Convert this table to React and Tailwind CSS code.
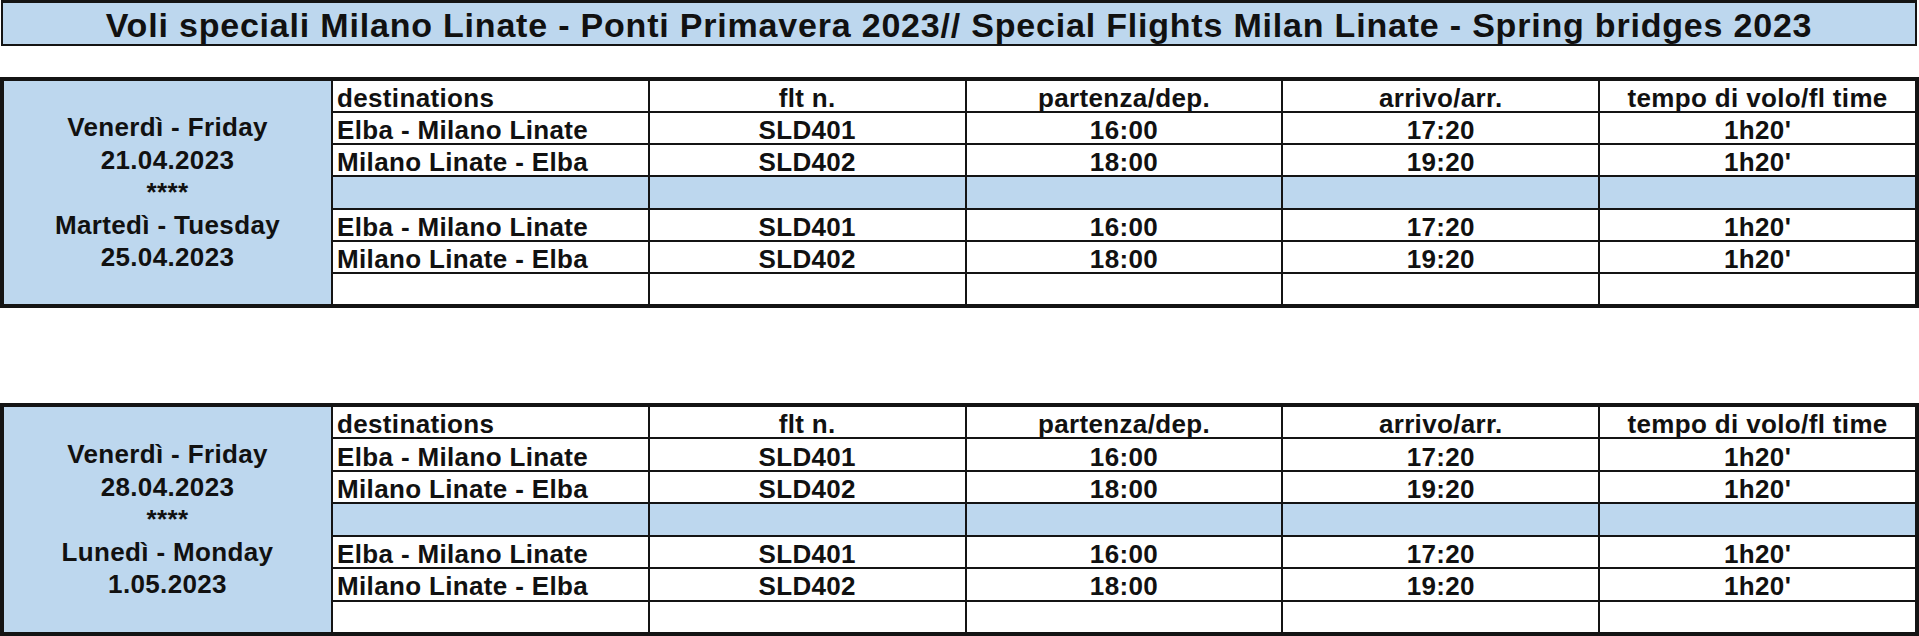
import React from 'react';

const flights = [
  ['Elba - Milano Linate', 'SLD401', '16:00', '17:20', "1h20'"],
  ['Milano Linate - Elba', 'SLD402', '18:00', '19:20', "1h20'"],
];

const header = ['destinations', 'flt n.', 'partenza/dep.', 'arrivo/arr.', 'tempo di volo/fl time'];

const tables = [
  { days: ['Venerdì - Friday', '21.04.2023', 'Martedì - Tuesday', '25.04.2023'], height: 'h-[231px]', gap: 'mt-[31px]' },
  { days: ['Venerdì - Friday', '28.04.2023', 'Lunedì - Monday', '1.05.2023'], height: 'h-[233px]', gap: 'mt-[95px]' },
];

const Row = ({ cells, blue }) =>
  [0, 1, 2, 3, 4].map((i) => (
    <div
      key={i}
      className={`flex items-center pt-[4px] leading-none whitespace-nowrap ${
        blue ? 'bg-[#bdd7ee]' : 'bg-white'
      } ${i === 0 ? 'justify-start pl-[4px]' : 'justify-center'}`}
    >
      {cells ? cells[i] : ''}
    </div>
  ));

const FlightTable = ({ days, height, gap }) => (
  <div
    className={`${gap} ${height} grid grid-cols-[327px_repeat(5,minmax(0,1fr))] grid-rows-7 gap-[2px] bg-[#141414] border-4 border-[#141414]`}
  >
    <div className="row-span-7 bg-[#bdd7ee] flex flex-col items-center justify-center text-center leading-[32.5px]">
      <span>{days[0]}</span>
      <span>{days[1]}</span>
      <span>****</span>
      <span>{days[2]}</span>
      <span>{days[3]}</span>
    </div>
    <Row cells={header} />
    <Row cells={flights[0]} />
    <Row cells={flights[1]} />
    <Row blue />
    <Row cells={flights[0]} />
    <Row cells={flights[1]} />
    <Row />
  </div>
);

export default function App() {
  return (
    <div className="w-[1919px] h-[636px] overflow-hidden bg-white text-[#111] font-bold font-['Liberation_Sans',Arial,sans-serif] text-[26px] tracking-[0.35px]">
      <div className="ml-[1px] w-[1916px] h-[46px] border-2 border-t-[3px] border-[#141414] bg-[#bdd7ee] flex items-center justify-center pt-[2px] text-[34px] tracking-[0.8px] leading-none whitespace-nowrap">
        Voli speciali Milano Linate - Ponti Primavera 2023// Special Flights Milan Linate - Spring bridges 2023
      </div>
      {tables.map((t, i) => (
        <FlightTable key={i} {...t} />
      ))}
    </div>
  );
}
